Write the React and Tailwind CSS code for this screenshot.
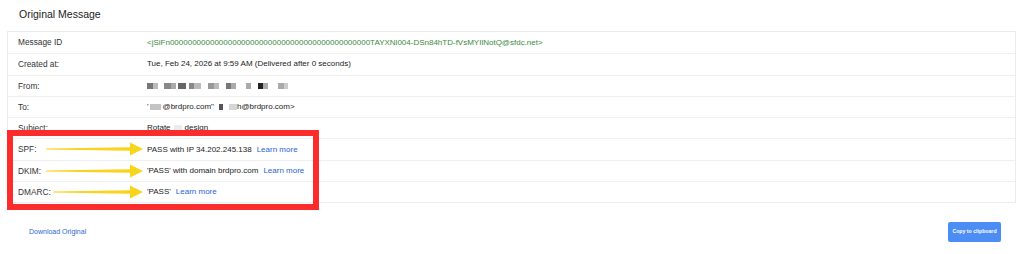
import React from 'react';

const rows = [
    { label: 'Message ID', key: 'id' },
    { label: 'Created at:', key: 'created' },
    { label: 'From:', key: 'from' },
    { label: 'To:', key: 'to' },
    { label: 'Subject:', key: 'subject' },
    { label: 'SPF:', key: 'spf', arrow: 0 },
    { label: 'DKIM:', key: 'dkim', arrow: 0 },
    { label: 'DMARC:', key: 'dmarc', arrow: 7 },
];

// redacted sender: [start, end, shade] in page px
const fromBlots = [
    [146, 152, '#777'], [152, 157, '#bbb'], [163, 170, '#888'], [170, 175, '#aaa'],
    [177, 185, '#666'], [188, 193, '#888'], [193, 200, '#bbb'], [207, 213, '#999'],
    [213, 218, '#bbb'], [225, 230, '#777'], [230, 235, '#aaa'], [245, 250, '#aaa'],
    [257, 262, '#222'], [262, 267, '#aaa'], [277, 283, '#aaa'], [283, 287, '#ccc'],
];

const Blot = ({ w, color, ml = 0 }) => (
    <span
        className="inline-block h-[6px] shrink-0 align-middle blur-[0.6px]"
        style={{ width: w, marginLeft: ml, background: color }}
    />
);

const Arrow = ({ offset }) => (
    <svg
        className="absolute top-[3px]"
        style={{ left: 38 + offset }}
        width={98 - offset}
        height="14"
        viewBox={`${offset} 0 ${98 - offset} 14`}
    >
        <polygon
            points={`${offset},6.4 84,5.3 84,0.6 97,7 84,13.4 84,8.7 ${offset},7.6`}
            fill="#f9d41c"
        />
    </svg>
);

const LearnMore = () => <span className="ml-[5px] text-[#2a63d6]">Learn more</span>;

const renderValue = (key) => {
    switch (key) {
        case 'id':
            return (
                <span className="text-[#3d8b3d]">
                    {'<jSiFn' + '0'.repeat(45) + 'TAYXNl004-DSn84hTD-fVsMYIlNotQ@sfdc.net>'}
                </span>
            );
        case 'created':
            return 'Tue, Feb 24, 2026 at 9:59 AM (Delivered after 0 seconds)';
        case 'from': {
            let x = 146;
            return (
                <span className="flex items-center">
                    {fromBlots.map(([s, e, c]) => {
                        const ml = s - x;
                        x = e;
                        return <Blot key={s} w={e - s} color={c} ml={ml} />;
                    })}
                </span>
            );
        }
        case 'to':
            return (
                <span className="flex items-center">
                    '<Blot w={11} color="#c4c4c4" ml={1} />
                    <span className="ml-[2px]">@brdpro.com"</span>
                    <Blot w={4} color="#555" ml={5} />
                    <Blot w={8} color="#d6d6d6" ml={6} />
                    <span>h@brdpro.com&gt;</span>
                </span>
            );
        case 'subject':
            return (
                <span className="flex items-center">
                    Rotate
                    <Blot w={8} color="#ececec" ml={3} />
                    <span className="ml-[3px]">design</span>
                </span>
            );
        case 'spf':
            return (
                <>
                    PASS with IP 34.202.245.138
                    <LearnMore />
                </>
            );
        case 'dkim':
            return (
                <>
                    'PASS' with domain brdpro.com
                    <LearnMore />
                </>
            );
        case 'dmarc':
            return (
                <>
                    'PASS'
                    <LearnMore />
                </>
            );
        default:
            return null;
    }
};

export default function App() {
    return (
        <div className="relative h-[254px] w-[1023px] bg-white font-['Liberation_Sans',Arial,sans-serif] text-[#222]">
            <h2 className="pl-[19px] pt-[8px] text-[10.5px] leading-[13px] text-[#222]">Original Message</h2>

            <div className="relative mx-[7px] mt-[10px] border border-[#ececec]">
                {rows.map((row, i) => (
                    <div
                        key={row.key}
                        className={`relative flex h-[21.3px] items-center ${i > 0 ? 'border-t border-[#efefef]' : ''}`}
                    >
                        <div className="w-[129px] shrink-0 pl-[10px] text-[8.3px] text-[#333]">{row.label}</div>
                        <div className="whitespace-nowrap pl-[10px] text-[8px]">{renderValue(row.key)}</div>
                        {row.arrow !== undefined && <Arrow offset={row.arrow} />}
                    </div>
                ))}

                <div className="pointer-events-none absolute left-[-1px] top-[98px] h-[80px] w-[312px] border-[6.5px] border-[#fd2c2c]" />
            </div>

            <div className="mt-[19px] flex items-center justify-between pl-[29px] pr-[22px]">
                <button className="text-[7px] text-[#2e66d6]">Download Original</button>
                <button className="h-[20px] w-[53px] rounded-[2px] bg-[#4c8df5] text-[5.2px] font-bold text-white">
                    Copy to clipboard
                </button>
            </div>
        </div>
    );
}
